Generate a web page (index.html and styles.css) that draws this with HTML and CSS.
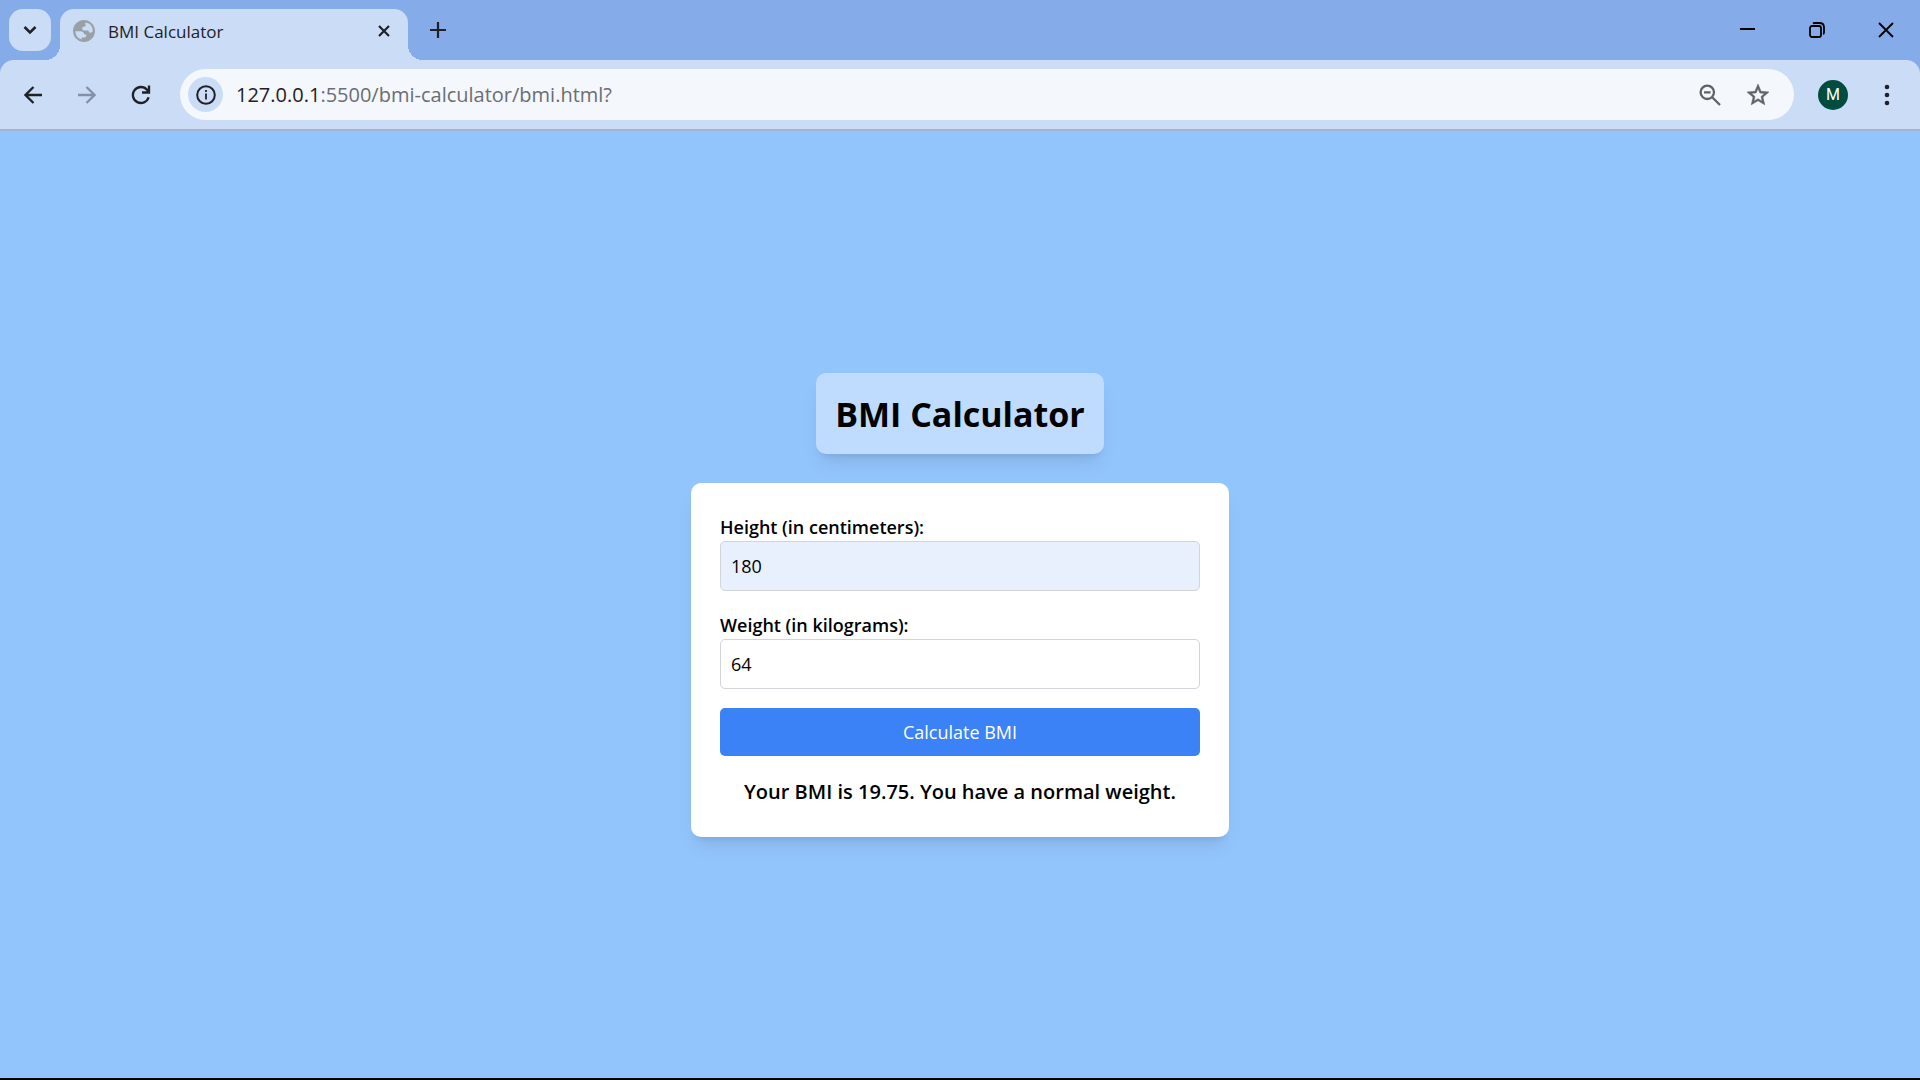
FILE: index.html
```html
<!DOCTYPE html>
<html lang="en">
<head>
<meta charset="utf-8">
<meta name="viewport" content="width=device-width, initial-scale=1">
<title>BMI Calculator</title>
<link rel="stylesheet" href="styles.css">
</head>
<body>
<div class="browser">
  <header class="chrome">
    <div class="tab-strip">
      <button class="tab-search" type="button" aria-label="Search tabs">
        <svg width="14" height="14" viewBox="0 0 14 14"><path d="M1.500 4 7 9.500 12.500 4" fill="none" stroke="currentColor" stroke-width="2.500"/></svg>
      </button>
      <div class="tab">
        <svg class="globe" width="22" height="22" viewBox="2 2 20 20"><path fill="currentColor" d="M12 2C6.480 2 2 6.480 2 12s4.480 10 10 10 10-4.480 10-10S17.520 2 12 2zM4.100 12.200 8.800 12.200Q12 12.500 12.200 15.200L14 15.200 14 16.600Q13.800 17.800 12.500 17.900L9.800 17.900 9.800 19.700Q4.500 18 4.100 12.200zM13.500 4.200Q19.900 5.200 20 12.300 19.200 14 17.300 13.500 16.200 12.900 15.900 11.500L12 11.500Q10.300 11.200 10.300 9.500 10.400 7.800 12.300 7.800L13.200 7.600Q14.200 6.800 13 5.500z"/></svg>
        <span class="tab-title">BMI Calculator</span>
        <button class="tab-close" type="button" aria-label="Close tab">
          <svg width="14" height="14" viewBox="0 0 14 14"><path d="M2 2l10 10M12 2 2 12" stroke="currentColor" stroke-width="2.200"/></svg>
        </button>
      </div>
      <button class="new-tab" type="button" aria-label="New tab">
        <svg width="16" height="16" viewBox="0 0 16 16"><path d="M8 0v16M0 8h16" stroke="currentColor" stroke-width="2.200"/></svg>
      </button>
      <div class="window-controls">
        <button type="button" aria-label="Minimize"><svg width="16" height="16" viewBox="0 0 16 16"><path d="M0 7h15" stroke="currentColor" stroke-width="2"/></svg></button>
        <button type="button" aria-label="Restore"><svg width="16" height="16" viewBox="0 0 16 16"><g fill="none" stroke="currentColor" stroke-width="1.800"><rect x="1" y="4" width="11" height="11" rx="2"/><path d="M4 1.500Q4.500 1 6 1h4.500Q15 1 15 5.500V10q0 1.500-.8 2.200"/></g></svg></button>
        <button type="button" aria-label="Close"><svg width="16" height="16" viewBox="0 0 16 16"><path d="M1 1l14 14M15 1 1 15" stroke="currentColor" stroke-width="1.800"/></svg></button>
      </div>
    </div>
    <div class="toolbar">
      <nav class="nav-buttons" aria-label="History">
        <button type="button" aria-label="Back"><svg width="18" height="18" viewBox="0 0 18 18"><path d="M18 9H1.500M9.500 1 1.500 9l8 8" fill="none" stroke="currentColor" stroke-width="2.300"/></svg></button>
        <button type="button" aria-label="Forward" disabled><svg width="18" height="18" viewBox="0 0 18 18"><path d="M0 9h16.500M8.500 1l8 8-8 8" fill="none" stroke="currentColor" stroke-width="2.300"/></svg></button>
        <button type="button" aria-label="Reload"><svg width="20" height="20" viewBox="0 0 20 20"><path d="M17.600 12.200A8 8 0 1 1 16 4.800L17.500 6.500M18 .5v7h-7" fill="none" stroke="currentColor" stroke-width="2.300"/></svg></button>
      </nav>
      <div class="omnibox">
        <button class="site-info" type="button" aria-label="View site information">
          <svg width="20" height="20" viewBox="0 0 20 20"><circle cx="10" cy="10" r="8.800" fill="none" stroke="currentColor" stroke-width="2"/><path d="M10 8.500v6M10 5v2" stroke="currentColor" stroke-width="1.800"/></svg>
        </button>
        <div class="url" role="textbox" aria-label="Address" contenteditable="true" spellcheck="false"><span class="url-host">127.0.0.1</span>:5500/bmi-calculator/bmi.html?</div>
        <button class="omni-button" type="button" aria-label="Zoom">
          <svg width="22" height="22" viewBox="0 0 22 22"><g fill="none" stroke="currentColor" stroke-width="2.300"><circle cx="8.300" cy="8.300" r="6.700"/><path d="M13.200 13.200l7.800 7.800M5 8.300h6.600"/></g></svg>
        </button>
        <button class="omni-button" type="button" aria-label="Bookmark this tab">
          <svg width="24" height="24" viewBox="1 1 22 22"><path fill="currentColor" stroke="currentColor" stroke-width=".5" d="M22 9.240l-7.190-.62L12 2 9.190 8.630 2 9.240l5.460 4.730L5.820 21 12 17.270 18.180 21l-1.630-7.030L22 9.240zM12 15.400l-3.760 2.270 1-4.280-3.320-2.880 4.380-.38L12 6.100l1.710 4.040 4.380.38-3.320 2.880 1 4.280L12 15.400z"/></svg>
        </button>
      </div>
      <button class="avatar" type="button" aria-label="Profile">M</button>
      <button class="menu" type="button" aria-label="Menu">
        <svg width="6" height="22" viewBox="0 0 6 22"><g fill="currentColor"><circle cx="3" cy="3" r="2.300"/><circle cx="3" cy="11" r="2.300"/><circle cx="3" cy="19" r="2.300"/></g></svg>
      </button>
    </div>
  </header>
  <main class="page">
    <h1 class="title">BMI Calculator</h1>
    <form class="card">
      <label for="height">Height (in centimeters):</label>
      <input class="filled" id="height" type="number" value="180">
      <label for="weight">Weight (in kilograms):</label>
      <input id="weight" type="number" value="64">
      <button class="submit" type="button">Calculate BMI</button>
      <output class="result" for="height weight">Your BMI is 19.75. You have a normal weight.</output>
    </form>
  </main>
</div>
</body>
</html>
```
FILE: styles.css
```css
* {
  box-sizing: border-box;
}

body {
  margin: 0;
  font-family: "Open Sans", "Noto Sans", sans-serif;
  color: #000;
}

button {
  display: flex;
  align-items: center;
  justify-content: center;
  flex: none;
  padding: 0;
  border: 0;
  background: none;
  color: #1f2125;
  font-family: inherit;
}

svg {
  display: block;
  flex: none;
}

.browser {
  display: flex;
  flex-direction: column;
  min-height: 100vh;
  border-bottom: 2px solid #000;
}

.chrome {
  background: #86abe9;
}

.tab-strip {
  display: flex;
  align-items: flex-start;
  height: 60px;
  padding: 9px 0 0 9px;
}

.tab-search {
  width: 42px;
  height: 42px;
  border-radius: 14px;
  background: #cbdcf6;
}

.tab {
  position: relative;
  display: flex;
  align-items: center;
  width: 348px;
  height: 51px;
  margin-left: 9px;
  padding: 0 10px 8px 13px;
  border-radius: 14px 14px 0 0;
  background: #cbdcf6;
}

/* Concave feet joining the tab to the toolbar */
.tab::before,
.tab::after {
  content: "";
  position: absolute;
  bottom: 0;
  width: 15px;
  height: 15px;
}

.tab::before {
  right: 100%;
  background: radial-gradient(circle at 0 0, transparent 15px, #cbdcf6 15px);
}

.tab::after {
  left: 100%;
  background: radial-gradient(circle at 100% 0, transparent 15px, #cbdcf6 15px);
}

.globe {
  color: #9aa0a6;
}

.tab-title {
  flex: 1;
  margin-left: 13px;
  padding-top: 2px;
  font-size: 17px;
  line-height: 24px;
  color: #1f2125;
}

.tab-close {
  width: 28px;
  height: 28px;
}

.new-tab {
  width: 42px;
  height: 42px;
  margin-left: 9px;
}

.window-controls {
  display: flex;
  margin-left: auto;
}

.window-controls button {
  width: 69px;
  height: 42px;
  color: #000;
}

.toolbar {
  display: flex;
  align-items: center;
  height: 71px;
  padding-right: 15px;
  border-bottom: 2px solid #a5b3cc;
  border-radius: 14px 14px 0 0;
  background: #cbdcf6;
}

.nav-buttons {
  display: flex;
  gap: 12px;
  padding: 0 18px 0 12px;
}

.nav-buttons button {
  width: 42px;
  height: 42px;
}

.nav-buttons button:disabled {
  color: #8391a8;
}

.omnibox {
  display: flex;
  flex: 1;
  align-items: center;
  height: 51px;
  padding: 0 15px 0 8px;
  border-radius: 26px;
  background: #f4f7fc;
}

.site-info {
  width: 35px;
  height: 35px;
  border-radius: 50%;
  background: #cbdcf6;
}

.url {
  flex: 1;
  margin-left: 13px;
  font-size: 20px;
  line-height: 28px;
  color: #6b6e72;
}

.url-host {
  color: #1f2125;
}

.omni-button {
  width: 42px;
  height: 42px;
  margin-left: 6px;
  color: #5f6368;
}

.avatar {
  width: 30px;
  height: 30px;
  margin-left: 24px;
  border-radius: 50%;
  background: #004d40;
  color: #fff;
  font-family: Roboto, sans-serif;
  font-size: 16px;
}

.menu {
  width: 36px;
  height: 42px;
  margin-left: 21px;
}

.page {
  display: flex;
  flex: 1;
  flex-direction: column;
  align-items: center;
  justify-content: center;
  gap: 29px;
  background: #93c5fd;
}

.title {
  margin: 0;
  padding: 20px 19px 18px;
  border-radius: 10px;
  background: #bfdbfe;
  box-shadow: 0 12px 18px -4px rgb(0 0 0 / 10%), 0 5px 7px -5px rgb(0 0 0 / 10%);
  font-size: 34px;
  line-height: 43px;
  font-weight: 700;
}

.card {
  display: flex;
  flex-direction: column;
  width: 100%;
  max-width: 538px;
  padding: 29px;
  border-radius: 10px;
  background: #fff;
  box-shadow: 0 12px 18px -4px rgb(0 0 0 / 10%), 0 5px 7px -5px rgb(0 0 0 / 10%);
}

.card label {
  padding-top: 2px;
  font-size: 18px;
  line-height: 27px;
  font-weight: 600;
}

.card input {
  height: 50px;
  margin: 0 0 19px;
  padding: 0 10px;
  border: 1px solid #d1d5db;
  border-radius: 5px;
  background: #fff;
  color: #000;
  font-family: inherit;
  font-size: 18px;
  appearance: textfield;
}

.card input.filled {
  background: #e8f0fe;
}

.submit {
  height: 48px;
  border-radius: 5px;
  background: #3b82f6;
  color: #fff;
  font-size: 18px;
}

.result {
  margin-top: 19px;
  font-size: 20px;
  line-height: 33px;
  font-weight: 600;
  text-align: center;
}
```
